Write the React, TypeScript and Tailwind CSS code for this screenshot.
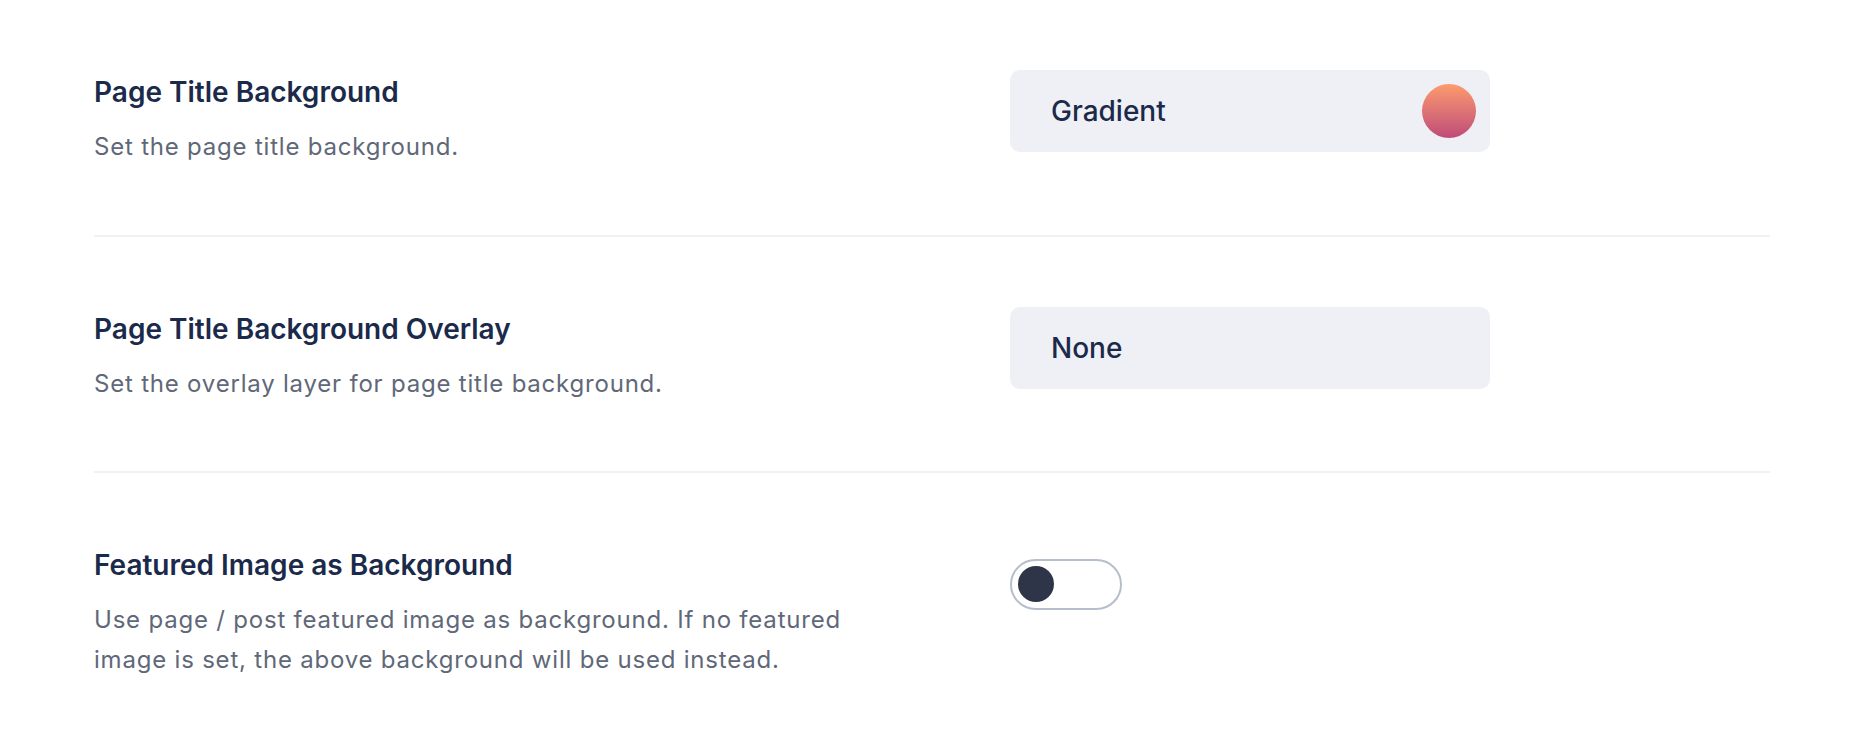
import React, { useState } from 'react';

function Toggle() {
    const [on, setOn] = useState(false);
    return (
        <button
            onClick={() => setOn(!on)}
            aria-label="Featured image as background"
            className="flex h-[51px] w-[112px] items-center rounded-full border-2 border-[#b6bdcc] bg-white px-[6px]"
        >
            <span
                className={
                    on
                        ? 'h-[36px] w-[36px] translate-x-[60px] rounded-full bg-[#2f3548]'
                        : 'h-[36px] w-[36px] rounded-full bg-[#2f3548]'
                }
            />
        </button>
    );
}

function SelectBox({ label, swatch }: { label: string; swatch?: boolean }) {
    return (
        <div className="flex h-[82px] w-[480px] items-center justify-between rounded-[10px] bg-[#eff0f5] pl-[41px] pr-[14px]">
            <span className="text-[28px] font-medium text-[#1b2a4b]">{label}</span>
            {swatch && <span className="h-[54px] w-[54px] rounded-full bg-gradient-to-b from-[#fd9b6b] to-[#bf4a77]" />}
        </div>
    );
}

function SettingRow({
    title,
    description,
    children,
}: {
    title: string;
    description: string;
    children: React.ReactNode;
}) {
    return (
        <div className="flex pt-[70px]">
            <div className="w-[916px] shrink-0 pt-[4px]">
                <h3 className="text-[28px] font-semibold leading-[36px] text-[#1b2a4b]">{title}</h3>
                <p className="mt-[17px] max-w-[790px] text-[24px] leading-[40px] tracking-[0.033em] text-[#5f6878]">
                    {description}
                </p>
            </div>
            <div className="flex h-[82px] items-center">{children}</div>
        </div>
    );
}

export default function App() {
    return (
        <div className="min-h-screen bg-white pl-[94px] pr-[96px]" style={{ fontFamily: 'Inter, "Noto Sans", sans-serif' }}>
            <div className="h-[235px]">
                <SettingRow title="Page Title Background" description="Set the page title background.">
                    <SelectBox label="Gradient" swatch />
                </SettingRow>
            </div>
            <div className="h-[2px] bg-[#f0f0f5]" />
            <div className="h-[234px]">
                <SettingRow title="Page Title Background Overlay" description="Set the overlay layer for page title background.">
                    <SelectBox label="None" />
                </SettingRow>
            </div>
            <div className="h-[2px] bg-[#f0f0f5]" />
            <div>
                <SettingRow
                    title="Featured Image as Background"
                    description="Use page / post featured image as background. If no featured image is set, the above background will be used instead."
                >
                    <Toggle />
                </SettingRow>
            </div>
        </div>
    );
}
